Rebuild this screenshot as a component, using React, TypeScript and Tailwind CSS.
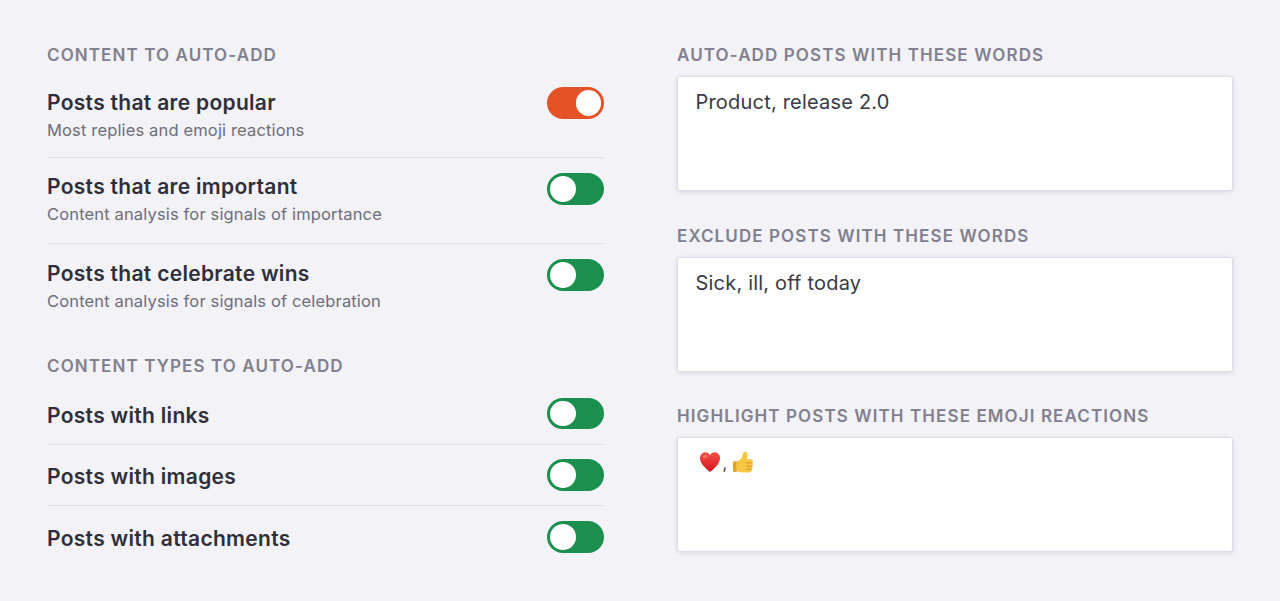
const Heart = () => (
  <svg width="22" height="22" viewBox="0 0 22 22">
    <defs>
      <linearGradient id="heartFill" x1="0" y1="0" x2="0" y2="1">
        <stop offset="0" stopColor="#f4504a" />
        <stop offset="1" stopColor="#d3141c" />
      </linearGradient>
    </defs>
    <path
      d="M11 21C7 17.300 1 13 1 7.200 1 3.600 3.400 1.200 6.200 1.200c2.100 0 3.800 1.100 4.800 3 1-1.900 2.700-3 4.800-3 2.800 0 5.200 2.400 5.200 6 0 5.800-6 10.100-10 13.800z"
      fill="url(#heartFill)"
    />
    <ellipse cx="6" cy="5.500" rx="2.600" ry="1.800" fill="#fb8f88" opacity="0.6" />
  </svg>
);

const ThumbsUp = () => (
  <svg width="22" height="23" viewBox="0 0 22 23">
    <path
      d="M1 11.500c0-.7.5-1.200 1.200-1.200h2.600v10.700H2.200c-.7 0-1.200-.5-1.200-1.200z"
      fill="#e3a02a"
    />
    <path
      d="M4.800 10.500c3-1.200 4.900-2.900 5.700-5.800.5-1.800.8-4 2.600-4 1.900 0 2.800 1.800 2.600 3.900-.1 1.400-.5 2.500-1 3.700h4c1.300 0 2.100.9 2.100 2 0 .7-.3 1.300-.8 1.700.6.400.9 1 .9 1.700 0 .8-.4 1.400-1 1.800.3.300.5.800.5 1.300 0 .8-.5 1.400-1.100 1.700.2.300.3.600.3 1 0 1.100-.9 1.900-2 1.900h-6.800c-2.400 0-4-.5-6-1.300z"
      fill="#f8c640"
    />
    <path
      d="M14.500 11.800h6M14.800 15.200h5.400M14.800 18.400h4.500"
      stroke="#cf8f22"
      strokeWidth="0.9"
      fill="none"
      strokeLinecap="round"
    />
  </svg>
);

const Heading = ({ children }: { children: string }) => (
  <h3 className="text-[17px] leading-6 font-semibold tracking-[1.1px] uppercase text-[#81808f]">
    {children}
  </h3>
);

const Toggle = ({ on }: { on?: boolean }) => (
  <div
    className={`flex h-[31.5px] w-[57px] shrink-0 rounded-full p-[3px] ${
      on ? "justify-end bg-[#e45227]" : "justify-start bg-[#1b8f4e]"
    }`}
  >
    <div className="h-[25.5px] w-[25.5px] rounded-full bg-white" />
  </div>
);

const DetailRow = ({
  title,
  text,
  on,
  last,
  textClass,
}: {
  title: string;
  text: string;
  on?: boolean;
  last?: boolean;
  textClass: string;
}) => (
  <div
    className={`flex h-[86px] items-start justify-between pt-[15px] ${
      last ? "" : "border-b border-[#dfdfe8]"
    }`}
  >
    <div className={textClass}>
      <p className="text-[21px] leading-[30px] font-semibold tracking-[0.3px] text-[#2f2f3a]">{title}</p>
      <p className="text-[16.500px] leading-[24px] tracking-[0.15px] text-[#6e6e7c]">{text}</p>
    </div>
    <Toggle on={on} />
  </div>
);

const SimpleRow = ({ title, last }: { title: string; last?: boolean }) => (
  <div
    className={`flex h-[61.5px] items-center justify-between ${
      last ? "" : "border-b border-[#dfdfe8]"
    }`}
  >
    <p className="pt-[5px] text-[21px] leading-[30px] font-semibold tracking-[0.3px] text-[#2f2f3a]">{title}</p>
    <Toggle />
  </div>
);

const Field = ({ label, children }: { label: string; children: React.ReactNode }) => (
  <div>
    <Heading>{label}</Heading>
    <div className="mt-[9px] h-[115px] rounded-[3px] border border-[#dddce8] bg-white px-[17.5px] py-[10px] text-[20px] leading-[30px] tracking-[0.2px] text-[#3a3a46] shadow-[0_1px_4px_rgba(70,70,110,0.16)]">
      {children}
    </div>
  </div>
);

export default function App() {
  return (
    <div className="h-[601px] w-[1280px] overflow-hidden bg-[#f2f2f7] font-['Inter',sans-serif] antialiased">
      <div className="grid grid-cols-[557px_556px] gap-x-[73px] pt-[43px] pl-[47px]">
        <div>
          <Heading>Content to auto-add</Heading>
          <div className="mt-[5px]">
            <DetailRow title="Posts that are popular" text="Most replies and emoji reactions" on textClass="mt-px" />
            <DetailRow title="Posts that are important" text="Content analysis for signals of importance" textClass="-mt-px" />
            <DetailRow title="Posts that celebrate wins" text="Content analysis for signals of celebration" last textClass="mt-0" />
          </div>
          <div className="mt-[24px]">
            <Heading>Content types to auto-add</Heading>
          </div>
          <div className="mt-[5px]">
            <SimpleRow title="Posts with links" />
            <SimpleRow title="Posts with images" />
            <SimpleRow title="Posts with attachments" last />
          </div>
        </div>
        <div className="flex flex-col gap-[32.5px]">
          <Field label="Auto-add posts with these words">Product, release 2.0</Field>
          <Field label="Exclude posts with these words">Sick, ill, off today</Field>
          <Field label="Highlight posts with these emoji reactions">
            <div className="-mt-[2px] flex items-center gap-[2px] pl-[3px]">
              <Heart />
              <span className="mt-[2px] text-[16px]">,</span>
              <span className="ml-[3px]"><ThumbsUp /></span>
            </div>
          </Field>
        </div>
      </div>
    </div>
  );
}
